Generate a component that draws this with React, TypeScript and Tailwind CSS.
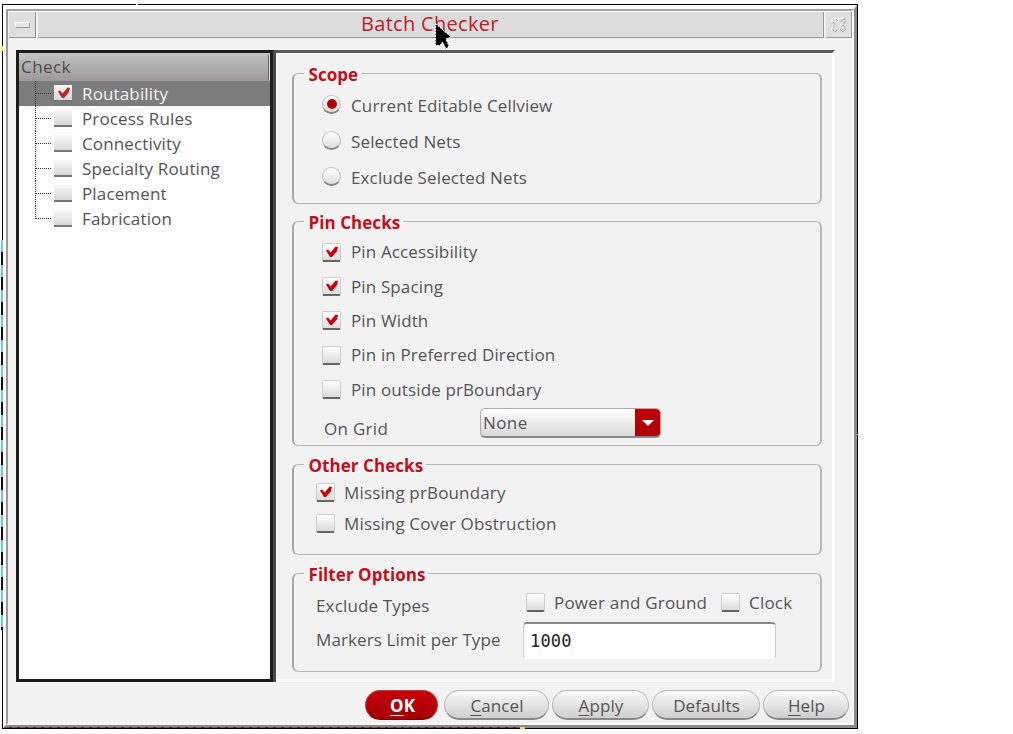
import React from "react";

const mark = "M3 6.5 L5 5.6 L7.6 8.4 L12.6 2.6 L15 3 L13.8 7.4 L9 13 L7 13 Z";

function Check({ on = false }: { on?: boolean }) {
  return (
    <span className="flex h-[19px] w-[19px] shrink-0 items-start justify-center rounded-[2px] border border-[#d0cdce] border-b-2 border-b-[#666] bg-gradient-to-b from-white to-[#dcdcdc]">
      {on && (
        <svg width="17" height="16" viewBox="0 0 17 16" className="shrink-0">
          <path d={mark} fill="#c8000c" />
        </svg>
      )}
    </span>
  );
}

function TreeCheck({ on = false }: { on?: boolean }) {
  return (
    <span className="flex h-[17px] w-[18px] shrink-0 items-start justify-center border-b-2 border-b-[#777] bg-gradient-to-b from-[#f8f8f8] to-[#d8d8d8]">
      {on && (
        <svg width="17" height="16" viewBox="0 0 17 16" className="shrink-0">
          <path d={mark} fill="#c3202b" />
        </svg>
      )}
    </span>
  );
}

function Radio({ on = false }: { on?: boolean }) {
  return (
    <span className="mb-[2px] flex h-[19px] w-[19px] shrink-0 items-center justify-center rounded-full border border-[#c4c4c4] border-b-2 border-b-[#888] bg-gradient-to-b from-white to-[#dedede]">
      {on && <span className="h-[10px] w-[10px] rounded-full bg-radial from-[#940000] to-[#ee0010]" />}
    </span>
  );
}

const tree = ["Routability", "Process Rules", "Connectivity", "Specialty Routing", "Placement", "Fabrication"];

function Group({ title, cls, children }: { title: string; cls: string; children: React.ReactNode }) {
  return (
    <section className={"w-[530px] shrink-0 rounded-[6px] border border-[#bab7b8] border-l-2 border-l-[#a8a8a8] border-r-2 border-r-[#b6b6b6] " + cls}>
      <h2 className="-mt-[13px] ml-[10px] h-[26px] w-fit bg-[#f2f2f2] pr-[3px] pl-[4.5px] leading-[27px] font-bold tracking-[0.05px] whitespace-nowrap text-[#c0101c]">{title}</h2>
      {children}
    </section>
  );
}

function Btn({ k, rest, cls }: { k?: string; rest: string; cls: string }) {
  return (
    <button className={"h-[30px] shrink-0 rounded-full border leading-[29px] whitespace-nowrap " + cls}>
      {k && <span className="underline decoration-1 underline-offset-[3px]">{k}</span>}
      {rest}
    </button>
  );
}

const gray = "border-[#b8b8b8] border-b-2 border-b-[#888] bg-gradient-to-b from-[#fafafa] to-[#cfcfcf] pl-px text-[#555] ";

export default function App() {
  return (
    <div className="relative h-[734px] w-[1013px] overflow-hidden bg-[#fcfcfc] pt-1 pl-[2px] font-['Open_Sans','Noto_Sans',sans-serif] text-[17px] tracking-[0.1px] text-[#555]">
      <div className="h-[725px] w-[856px] border border-black bg-[#f2f2f2]">
        <div className="h-[723px] border-t-[4px] border-r-[3px] border-b-[3px] border-l-[3px] border-t-[#fbfbfb] border-r-[#8b8b8b] border-b-[#8b8b8b] border-l-[#fbfbfb]">
          <div className="flex h-[716px] flex-col border-2 border-t-[#a5a2a3] border-r-[#fbfbfb] border-b-[#fbfbfb] border-l-[#9a9898]">
            <header className="flex h-[27px] shrink-0 gap-[2px] border-t border-white pl-[1px]">
              <div className="flex w-[27px] items-center justify-center border-r border-b border-r-[#999] border-b-[#999] bg-[#dfdfdf]">
                <span className="h-[6px] w-[15px] border border-t-white border-r-[#999] border-b-[#999] border-l-white bg-[#e6e6e6]" />
              </div>
              <div className="w-[786px] border-r border-b border-[#999] bg-[#dcdcdc]">
                <h1 className="ml-[323px] text-[20px] leading-[23px] tracking-[0.3px] whitespace-nowrap text-[#bd1c2a]">Batch Checker</h1>
              </div>
              <div className="flex w-[26px] items-center justify-center border-r border-b border-[#999] bg-[#dfdfdf]">
                <svg width="16" height="16" viewBox="0 0 16 16" fill="none">
                  <path d="M1 5V2L4 1L7 3L9 1H13M1 14V11L3 8M9 8L11 6" stroke="#fff" />
                  <path d="M2 5L4 8L2 11V13L4 15L7 12M7 4L5 2M10 5L12 2H14V5L12 8L14 11V13L12 15L9 12" stroke="#a0a0a0" strokeDasharray="3 1" />
                </svg>
              </div>
            </header>

            <main className="mt-[12px] ml-[8px] flex h-[632px] w-[819px] shrink-0">
              <aside className="h-[632px] w-[260px] shrink-0 border-r-[3px] border-[#484b4b]">
                <div className="h-[632px] border-[3px] border-[#1c1c1c] bg-[#fcfcfc]">
                  <div className="flex h-[28px] items-center bg-gradient-to-b from-[#c3c3c3] to-[#9b9999] pl-[2px] text-[#4c4c4c]">
                    <span className="flex-1 leading-[26px] tracking-[0.45px]">Check</span>
                    <span className="h-[25px] w-[2px] border-r border-l border-r-[#ddd] border-l-[#666]" />
                  </div>
                  {tree.map((t, i) => (
                    <div key={t} className={"flex h-[25px] items-center leading-[24px] " + (i === 0 ? "bg-[#7c7c7c] text-[#f4f4f4]" : "")}>
                      <svg width="35" height="25" className="shrink-0">
                        <path d={i === 5 ? "M16.5 0V13" : "M16.5 0V25"} stroke="#333" strokeDasharray="1 1" />
                        <path d="M17 12.5H32" stroke="#333" strokeDasharray="1 1" />
                      </svg>
                      <TreeCheck on={i === 0} />
                      <span className="ml-[10px] tracking-[0.14px] whitespace-nowrap">{t}</span>
                    </div>
                  ))}
                </div>
              </aside>

              <div className="flex h-[632px] w-[559px] flex-col border-t-[3px] border-r-[3px] border-b-[3px] border-t-[#5a5a5a] border-r-[#fcfcfc] border-b-[#fcfcfc] pl-[16px]">
                <Group title="Scope" cls="mt-[20px] h-[131px]">
                  {["Current Editable Cellview", "Selected Nets", "Exclude Selected Nets"].map((s, i) => (
                    <div key={s} className="flex h-[36px] items-center pl-[28px] leading-[36px]">
                      <Radio on={i === 0} />
                      <span className="mt-px ml-[10px] tracking-[0.13px] whitespace-nowrap">{s}</span>
                    </div>
                  ))}
                </Group>

                <Group title="Pin Checks" cls="mt-[17px] h-[225px]">
                  {["Pin Accessibility", "Pin Spacing", "Pin Width", "Pin in Preferred Direction", "Pin outside prBoundary"].map((s, i) => (
                    <div key={s} className="flex h-[34.4px] items-center pl-[28px] leading-[34px]">
                      <Check on={i < 3} />
                      <span className="ml-[10px] tracking-[0.13px] whitespace-nowrap">{s}</span>
                    </div>
                  ))}
                  <div className="flex h-[30px] pl-[30px]">
                    <span className="w-[156px] pt-[8px] leading-[28px] tracking-[0.3px]">On Grid</span>
                    <div className="mt-px flex h-[30px] w-[181px] overflow-hidden rounded-[5px] border border-[#aaa] border-b-2 border-b-[#888] bg-gradient-to-b from-white to-[#d9d9d9]">
                      <span className="flex-1 pl-[2px] leading-[27px] tracking-[0.4px]">None</span>
                      <span className="-mr-px -mb-px flex w-[26px] items-center justify-center rounded-r-[5px] bg-gradient-to-b from-[#c20008] to-[#a90006]">
                        <svg width="12" height="6" viewBox="0 0 12 6">
                          <path d="M0 0H12L6 6Z" fill="#fff" />
                        </svg>
                      </span>
                    </div>
                  </div>
                </Group>

                <Group title="Other Checks" cls="mt-[18px] h-[91px]">
                  <div className="-mt-px">
                    {["Missing prBoundary", "Missing Cover Obstruction"].map((s, i) => (
                      <div key={s} className="flex h-[31px] items-center pl-[22px] leading-[31px]">
                        <Check on={i === 0} />
                        <span className="ml-[9px] tracking-[0.15px] whitespace-nowrap">{s}</span>
                      </div>
                    ))}
                  </div>
                </Group>

                <Group title="Filter Options" cls="mt-[18px] h-[99px]">
                  <div className="-mt-px flex h-[33px] items-center pl-[22px]">
                    <span className="w-[210px] pt-[6px] tracking-[0.15px]">Exclude Types</span>
                    <Check />
                    <span className="ml-[9px] w-[167px] tracking-[0.2px] whitespace-nowrap">Power and Ground</span>
                    <Check />
                    <span className="ml-[9px] tracking-[0.2px]">Clock</span>
                  </div>
                  <div className="mt-[2px] flex h-[38px] items-center pl-[22px]">
                    <span className="w-[207px] whitespace-nowrap">Markers Limit per Type</span>
                    <input readOnly value="1000" className="h-[37px] w-[253px] rounded-[4px] border border-t-2 border-[#ccc] border-t-[#888] border-b-[#fcfcfc] bg-[#fcfcfc] pt-px pl-[6px] font-['DejaVu_Sans_Mono',monospace] text-[17px] tracking-[0.2px] text-[#222] outline-none" />
                  </div>
                </Group>
              </div>
            </main>

            <footer className="mt-[8px] ml-[357px] flex shrink-0">
              <Btn k="O" rest="K" cls="w-[73px] border-[#b04045] border-b-[#700] bg-gradient-to-b from-[#c80008] to-[#a30006] pl-[2px] font-bold text-white" />
              <Btn k="C" rest="ancel" cls={gray + "ml-[6px] w-[105px]"} />
              <Btn k="A" rest="pply" cls={gray + "ml-[3px] w-[97px]"} />
              <Btn rest="Defaults" cls={gray + "ml-[3px] w-[108px]"} />
              <Btn k="H" rest="elp" cls={gray + "ml-[3px] w-[86px]"} />
            </footer>
          </div>
        </div>
      </div>

      <div className="absolute top-[240px] left-[1px] h-[390px] w-[2px] bg-[repeating-linear-gradient(to_bottom,#6cc4e6_0_12px,#111_12px_25px)]" />
      <div className="absolute top-[46px] left-[1px] h-[5px] w-[3px] bg-[#f4f46a]" />
      <div className="absolute top-[727px] left-[4px] h-px w-[516px] bg-[repeating-linear-gradient(to_right,#b03c48_0_5px,#333_5px_8px)]" />
      <div className="absolute top-[727px] left-[520px] h-[2px] w-[5px] bg-[#e8e04a]" />
      <div className="absolute top-[4px] left-[136px] h-px w-[2px] bg-white" />
      <div className="absolute top-[434px] left-[857px] h-px w-px bg-[#bbb]" />
      <svg className="absolute top-[22px] left-[434px]" width="20" height="30" viewBox="0 0 20 30">
        <path d="M1.5 1.5 L17 15 L12 17 L15 24 L12 27 L8.5 20 L6 23.5 H1.5 Z" fill="#000" stroke="#fff" strokeDasharray="2 1" />
      </svg>
    </div>
  );
}
